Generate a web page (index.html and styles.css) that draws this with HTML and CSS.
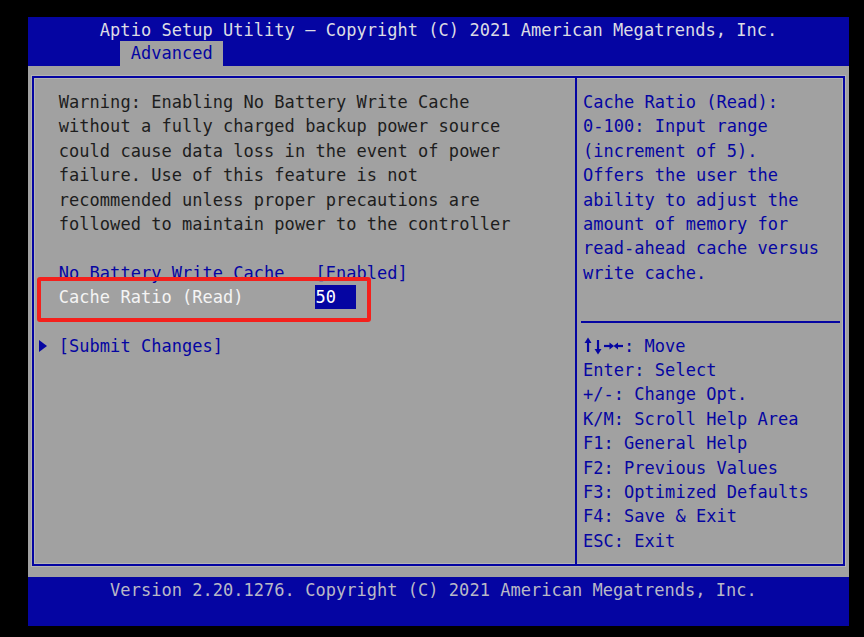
FILE: index.html
```html
<!DOCTYPE html>
<html lang="en">
<head>
<meta charset="utf-8">
<title>Aptio Setup Utility</title>
<link rel="stylesheet" href="styles.css">
</head>
<body>
<div class="screen">
  <header class="titlebar">
    <div class="row title">Aptio Setup Utility – Copyright (C) 2021 American Megatrends, Inc.</div>
    <div class="row tabs"><span class="tab">Advanced</span></div>
  </header>

  <main class="workspace">
    <div class="frame">
      <section class="panel main-panel">
        <div class="row warn">Warning: Enabling No Battery Write Cache</div>
        <div class="row warn">without a fully charged backup power source</div>
        <div class="row warn">could cause data loss in the event of power</div>
        <div class="row warn">failure. Use of this feature is not</div>
        <div class="row warn">recommended unless proper precautions are</div>
        <div class="row warn">followed to maintain power to the controller</div>
        <div class="row"></div>
        <div class="row option"><span class="label">No Battery Write Cache</span><span class="value">[Enabled]</span></div>
        <div class="row option selected"><span class="label">Cache Ratio (Read)</span><span class="value"><span class="field">50</span></span></div>
        <div class="row"></div>
        <div class="row option submenu"><span class="pointer"></span>[Submit Changes]</div>
      </section>

      <aside class="panel help-panel">
        <div class="row">Cache Ratio (Read):</div>
        <div class="row">0-100: Input range</div>
        <div class="row">(increment of 5).</div>
        <div class="row">Offers the user the</div>
        <div class="row">ability to adjust the</div>
        <div class="row">amount of memory for</div>
        <div class="row">read-ahead cache versus</div>
        <div class="row">write cache.</div>
        <div class="row"></div>
        <div class="row divider"></div>
        <div class="row keys">
          <svg class="arrows" width="41" height="24" viewBox="0 0 41 24" aria-label="↑↓→←">
            <g fill="none" stroke="currentColor" stroke-width="2.2">
              <path d="M5 18V7"/>
              <path d="M15 6v11"/>
              <path d="M21 12h7"/>
              <path d="M33 12h7"/>
            </g>
            <g fill="currentColor">
              <path d="M5 3.5 1.5 9h7z"/>
              <path d="M15 20.5 11.5 15h7z"/>
              <path d="M31 12l-4.5-3.5v7z"/>
              <path d="M30.5 12l4.5-3.5v7z"/>
            </g>
          </svg><span>: Move</span>
        </div>
        <div class="row">Enter: Select</div>
        <div class="row">+/-: Change Opt.</div>
        <div class="row">K/M: Scroll Help Area</div>
        <div class="row">F1: General Help</div>
        <div class="row">F2: Previous Values</div>
        <div class="row">F3: Optimized Defaults</div>
        <div class="row">F4: Save &amp; Exit</div>
        <div class="row">ESC: Exit</div>
      </aside>
    </div>
  </main>

  <footer class="statusbar">
    <div class="row version">Version 2.20.1276. Copyright (C) 2021 American Megatrends, Inc.</div>
  </footer>

  <div class="callout"></div>
</div>
</body>
</html>
```

FILE: styles.css
```css
:root {
  --cw: 10.264px;
  --rh: 24.36px;
  --blue: #0505a2;
  --grey: #a1a1a1;
}

* {
  box-sizing: border-box;
}

html,
body {
  margin: 0;
  background: #000;
}

body {
  width: 864px;
  height: 637px;
  overflow: hidden;
  font-family: "DejaVu Sans Mono", "Liberation Mono", monospace;
  font-size: 17px;
  letter-spacing: 0.03px;
}

.screen {
  position: relative;
  margin: 17px 0 0 28px;
  width: 821px;
  height: 609px;
  display: flex;
  flex-direction: column;
}

.row {
  height: var(--rh);
  line-height: var(--rh);
  white-space: pre;
}

/* top bar with the title and the page tab */
.titlebar {
  background: var(--blue);
  color: #dcdce4;
}

.title {
  padding-left: calc(7 * var(--cw));
  padding-top: 1px;
}

.tabs {
  padding-left: calc(9 * var(--cw));
}

.tab {
  display: inline-block;
  width: calc(10 * var(--cw));
  height: var(--rh);
  padding-left: var(--cw);
  background: var(--grey);
  color: var(--blue);
}

/* grey work area with the bordered frame */
.workspace {
  height: calc(21 * var(--rh));
  background: var(--grey);
  padding: 10px 4px 11px 4px;
}

.frame {
  height: 100%;
  border: 2px solid var(--blue);
  display: grid;
  grid-template-columns: 543px 1fr;
  box-shadow: 0 0 0 1px #b4b4b4, inset 0 0 0 1px #b4b4b4;
}

.panel {
  padding-top: 12.4px;
}

.main-panel {
  padding-left: 24.8px;
  border-right: 2px solid var(--blue);
}

.warn {
  color: #1d1d1d;
}

.option {
  color: var(--blue);
  display: flex;
}

.option .label {
  width: calc(25 * var(--cw));
}

.selected {
  color: #f4f4f4;
}

.field {
  display: inline-block;
  width: calc(4 * var(--cw));
  background: var(--blue);
  color: #fff;
}

.submenu {
  margin-left: calc(-2 * var(--cw));
  align-items: center;
}

/* right-pointing marker before a submenu entry */
.pointer {
  width: 0;
  height: 0;
  margin: 0 calc(2 * var(--cw) - 9px) 0 1px;
  border-left: 8px solid var(--blue);
  border-top: 6px solid transparent;
  border-bottom: 6px solid transparent;
}

.help-panel {
  padding-left: 6px;
  padding-right: 3px;
  color: var(--blue);
}

.divider {
  display: flex;
  align-items: center;
}

.divider::before {
  content: "";
  flex: 1;
  height: 2px;
  margin-left: -2px;
  background: var(--blue);
}

.keys {
  display: flex;
  align-items: center;
}

.arrows {
  display: block;
  width: calc(4 * var(--cw));
  flex: none;
}

/* bottom status bar */
.statusbar {
  height: calc(2 * var(--rh));
  background: var(--blue);
  color: #b9b9c6;
}

.version {
  padding-left: calc(8 * var(--cw));
  padding-top: 1px;
}

/* red highlight drawn over the selected option */
.callout {
  position: absolute;
  left: 9px;
  top: 260px;
  width: 334px;
  height: 45px;
  border: 4px solid #f4201c;
  border-radius: 3px;
}
```
